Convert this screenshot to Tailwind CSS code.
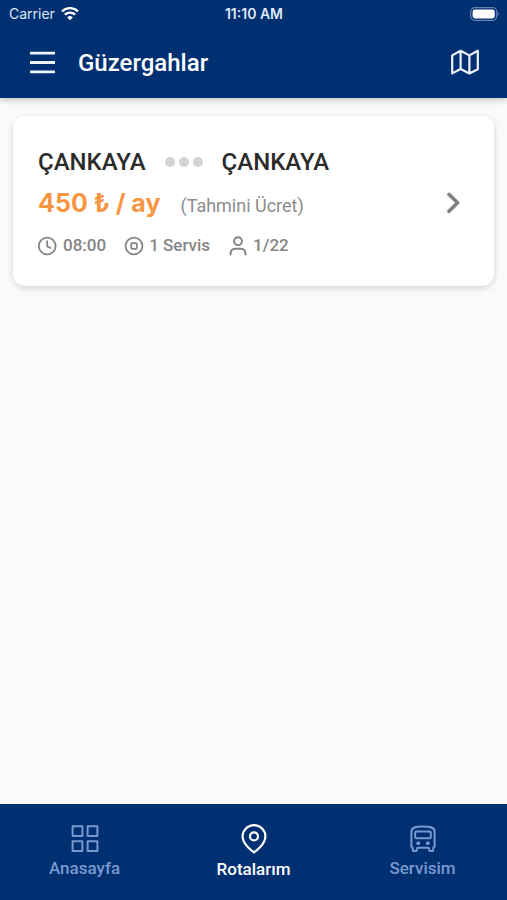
<!DOCTYPE html>
<html lang="tr">
<head>
<meta charset="utf-8">
<meta name="viewport" content="width=device-width, initial-scale=1">
<title>Güzergahlar</title>
<script src="https://cdn.jsdelivr.net/npm/@tailwindcss/browser@4"></script>
</head>
<body class="flex min-h-screen flex-col bg-[#fafafa] font-['Roboto',sans-serif]">
  <header class="bg-[#002f72] text-white shadow-[0_2px_6px_rgba(0,0,0,0.22)]">
    <div class="grid h-7 grid-cols-3 items-center pr-2 pl-[9px] font-['Inter',sans-serif] text-sm text-[#dfe8f5]">
      <div class="flex items-center gap-[6px]">
        <span>Carrier</span>
        <svg class="h-[14px] w-[18px]" viewBox="0 0 18 14" fill="none" stroke="#fff" stroke-width="2.4" aria-hidden="true">
          <path d="M1 4.400a11.500 11.500 0 0 1 16 0"/>
          <path d="M3.900 7.700a7.300 7.300 0 0 1 10.200 0"/>
          <path d="M9 13.200 6.200 10.400a4 4 0 0 1 5.600 0z" fill="#fff" stroke="none"/>
        </svg>
      </div>
      <span class="text-center font-semibold whitespace-nowrap">11:10 AM</span>
      <svg class="h-[14px] w-[30px] justify-self-end" viewBox="0 0 30 14" aria-hidden="true">
        <rect x="1.700" y="0.700" width="26" height="12.600" rx="4" fill="none" stroke="#6482ae" stroke-width="1.200"/>
        <rect x="3.600" y="2.600" width="22.200" height="8.800" rx="2.400" fill="#fff"/>
        <path d="M28.600 4.800c1.600.6 1.600 3.800 0 4.400z" fill="#6482ae"/>
      </svg>
    </div>
    <div class="flex h-[70px] items-center pr-[27px] pl-[30px]">
      <button type="button" aria-label="Menü" class="h-6 w-[25px]">
        <svg class="h-6 w-[25px]" viewBox="0 0 25 24" fill="none" stroke="#eef3fb" stroke-width="2.8"><path d="M0 2.200h25M0 11.500h25M0 20.800h25"/></svg>
      </button>
      <h1 class="ml-[23px] flex-1 text-2xl font-medium">Güzergahlar</h1>
      <button type="button" aria-label="Harita" class="h-7 w-[30px]">
        <svg class="h-7 w-[30px]" viewBox="0 0 30 28" fill="none" stroke="#eef3fb" stroke-width="2.2" stroke-linejoin="round" stroke-linecap="round"><path d="M2.200 6.400 10.600 1.800 19.400 6.400 27.800 1.800V20.200L19.400 24.400 10.600 20 2.200 24.400zM10.600 1.800V20M19.400 6.400V24.400"/></svg>
      </button>
    </div>
  </header>

  <main class="flex-1 px-[13px] pt-[18px]">
    <a href="#" class="flex items-center justify-between rounded-xl bg-white pt-[31px] pr-[34px] pb-[28px] pl-[25px] shadow-[0_2px_6px_rgba(0,0,0,0.16)]">
      <div>
        <div class="flex h-[30px] items-center text-2xl font-medium text-[#2b2b2b]">
          <span>ÇANKAYA</span>
          <span class="mx-[19px] flex gap-1">
            <i class="size-[10px] rounded-full bg-[#d4d4d4]"></i>
            <i class="size-[10px] rounded-full bg-[#d4d4d4]"></i>
            <i class="size-[10px] rounded-full bg-[#d4d4d4]"></i>
          </span>
          <span>ÇANKAYA</span>
        </div>
        <div class="mt-[10px] flex h-[32px] items-baseline gap-5">
          <strong class="font-['Inter',sans-serif] text-[25px] leading-8 font-bold text-[#f79642]">450 ₺ / ay</strong>
          <span class="text-lg text-[#8c8c8c]">(Tahmini Ücret)</span>
        </div>
        <div class="mt-[15px] flex h-6 items-center gap-[18px] text-[17px] font-medium text-[#858585]">
          <span class="flex items-center gap-[5px]">
            <svg class="size-5" viewBox="0 0 20 20" fill="none" stroke="currentColor" stroke-width="1.8" stroke-linecap="round" stroke-linejoin="round" aria-hidden="true"><circle cx="9.200" cy="10" r="8.400"/><path d="M9.200 5.200V10.400L12.500 12"/></svg>
            08:00
          </span>
          <span class="flex items-center gap-[5px]">
            <svg class="size-5" viewBox="0 0 20 20" fill="none" stroke="currentColor" stroke-width="1.8" stroke-linejoin="round" aria-hidden="true"><circle cx="10" cy="10" r="8.400"/><rect x="7.200" y="7.200" width="5.600" height="5.600" rx=".8"/></svg>
            1 Servis
          </span>
          <span class="flex items-center gap-[5px]">
            <svg class="size-5" viewBox="0 0 20 20" fill="none" stroke="currentColor" stroke-width="2" stroke-linecap="round" aria-hidden="true"><circle cx="10" cy="5.200" r="3.900"/><path d="M2.600 18.600v-1.600a4.200 4.200 0 0 1 4.200-4.200h6.400a4.200 4.200 0 0 1 4.200 4.200v1.600"/></svg>
            1/22
          </span>
        </div>
      </div>
      <svg class="h-[22px] w-[14px]" viewBox="0 0 14 22" fill="none" stroke="#808080" stroke-width="3.600" stroke-linecap="round" stroke-linejoin="round" aria-hidden="true"><path d="M3 2.400 11.600 10.800 3 19.200"/></svg>
    </a>
  </main>

  <nav class="grid h-24 grid-cols-3 bg-[#002f72] pt-5 text-[17px] leading-6 font-medium text-[#7899ce]">
    <a href="#" class="flex flex-col items-center gap-[2px]">
      <svg class="size-[30px]" viewBox="0 0 30 30" fill="none" stroke="currentColor" stroke-width="2" stroke-linejoin="round" aria-hidden="true"><rect x="2.600" y="2.200" width="9.800" height="9.800"/><rect x="17.600" y="2.200" width="9.800" height="9.800"/><rect x="2.600" y="17.200" width="9.800" height="9.800"/><rect x="17.600" y="17.200" width="9.800" height="9.800"/></svg>
      Anasayfa
    </a>
    <a href="#" aria-current="page" class="flex flex-col items-center gap-[3px] text-white">
      <svg class="size-[30px]" viewBox="0 0 30 30" fill="none" stroke="currentColor" stroke-width="2.200" stroke-linejoin="round" aria-hidden="true"><path d="M15 28.400C15 28.400 3.600 20.800 3.600 12.400a11.400 11.200 0 0 1 22.800 0C26.400 20.800 15 28.400 15 28.400z"/><circle cx="15" cy="12.400" r="4"/></svg>
      Rotalarım
    </a>
    <a href="#" class="flex flex-col items-center gap-[2px]">
      <svg class="size-[30px]" viewBox="0 0 30 30" fill="none" stroke="currentColor" stroke-width="2" stroke-linejoin="round" aria-hidden="true"><path d="M3.400 22.600V7.600C3.400 3.400 7.400 2.400 15 2.400S26.600 3.400 26.600 7.600v15l-1.200 1.200-.4 3.200h-3.400l-1-3.200H9.400l-1 3.200H5l-.4-3.200z"/><rect x="7.200" y="7.600" width="15.600" height="6.600" rx="1"/><circle cx="10.200" cy="19.200" r="1.900" fill="currentColor" stroke="none"/><circle cx="19.800" cy="19.200" r="1.900" fill="currentColor" stroke="none"/></svg>
      Servisim
    </a>
  </nav>
</body>
</html>
